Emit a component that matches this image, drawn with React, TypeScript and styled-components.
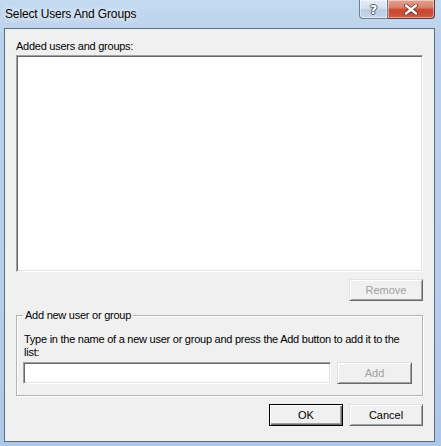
import React from "react";
import styled, { createGlobalStyle } from "styled-components";

const Global = createGlobalStyle`
  html, body { margin: 0; padding: 0; background: #b9d1ea; }
  * { box-sizing: border-box; }
`;

const Window = styled.div`
  width: 441px;
  height: 446px;
  display: flex;
  flex-direction: column;
  background: linear-gradient(180deg, #c4daf1 0%, #bad2eb 8%, #b6cfe9 60%, #adc8e6 100%);
  font-family: "Liberation Sans", Arial, sans-serif;
  font-size: 11px;
  color: #000;
  position: relative;
`;

const TitleBar = styled.div`
  height: 28px;
  display: flex;
  align-items: flex-start;
  justify-content: space-between;
  padding: 0 6px 0 5px;
`;

const Title = styled.div`
  font-family: "Liberation Sans", Arial, sans-serif;
  font-size: 12px;
  line-height: 14px;
  padding-top: 7px;
  letter-spacing: -0.15px;
  color: #000;
  text-shadow: 0 0 6px rgba(255, 255, 255, 0.9), 0 0 10px rgba(255, 255, 255, 0.7);
`;

const Caption = styled.div`
  display: flex;
  height: 19px;
`;

const CapButton = styled.div<{ $close?: boolean }>`
  width: ${(p) => (p.$close ? 47 : 29)}px;
  height: 19px;
  display: flex;
  align-items: center;
  justify-content: center;
  border: 1px solid ${(p) => (p.$close ? "#5d3b36" : "#6d7f93")};
  border-top: none;
  border-left: ${(p) => (p.$close ? "none" : undefined)};
  border-radius: ${(p) => (p.$close ? "0 0 4px 0" : "0 0 0 4px")};
  background: ${(p) =>
    p.$close
      ? "linear-gradient(180deg, #e3a08f 0%, #d88470 40%, #c9452e 55%, #cc5a3e 100%)"
      : "linear-gradient(180deg, #e6edf6 0%, #d5e1ef 45%, #bccde3 55%, #c7d7eb 100%)"};
  box-shadow: inset 0 0 0 1px rgba(255, 255, 255, 0.45);
`;

const HelpGlyph = styled.span`
  font-family: "DejaVu Sans", sans-serif;
  font-weight: bold;
  font-size: 13px;
  line-height: 13px;
  color: #fff;
  text-shadow: -1px 0 #4a5a6c, 1px 0 #4a5a6c, 0 -1px #4a5a6c, 0 1px #4a5a6c;
`;

const Client = styled.div`
  flex: 1;
  margin: 0 6px 4px 4px;
  border: 1px solid #5a6f85;
  background: #f0f0f0;
  display: flex;
  flex-direction: column;
  padding: 11px 11px 15px 11px;
`;

const Label = styled.div`
  line-height: 13px;
  height: 13px;
  letter-spacing: -0.25px;
`;

const Sunken = styled.div`
  background: #fff;
  border: 1px solid;
  border-color: #a0a0a0 #fff #fff #a0a0a0;
  box-shadow: inset 1px 1px 0 #696969, inset -1px -1px 0 #e3e3e3;
`;

const ListBox = styled(Sunken)`
  margin-top: 2px;
  flex: 1;
`;

const Row = styled.div<{ $mt: number }>`
  display: flex;
  justify-content: flex-end;
  gap: 6px;
  margin-top: ${(p) => p.$mt}px;
`;

const Button = styled.button<{ $default?: boolean; $w?: number }>`
  width: ${(p) => p.$w ?? 74}px;
  height: 22px;
  padding: 0;
  background: #f0f0f0;
  font-family: "Liberation Sans", Arial, sans-serif;
  font-size: 11px;
  color: ${(p) => (p.disabled ? "#a0a0a0" : "#000")};
  border: 1px solid;
  border-color: ${(p) => (p.$default ? "#000" : "#e3e3e3 #696969 #696969 #e3e3e3")};
  box-shadow: ${(p) =>
    p.$default
      ? "inset 1px 1px 0 #fff, inset -1px -1px 0 #696969, inset -2px -2px 0 #a0a0a0"
      : "inset 1px 1px 0 #fff, inset -1px -1px 0 #a0a0a0"};
  flex: none;
`;

const Group = styled.fieldset`
  margin: 8px 0 0 0;
  padding: 11px 10px 11px 6px;
  border: 1px solid #b3b3b3;
  box-shadow: inset 1px 1px 0 #fff, 1px 1px 0 #fff;
  min-width: 0;
`;

const Legend = styled.legend`
  padding: 0 2px;
  line-height: 13px;
  letter-spacing: -0.25px;
`;

const Desc = styled.div`
  line-height: 13px;
  letter-spacing: -0.25px;
  padding-left: 1px;
`;

const InputRow = styled.div`
  display: flex;
  gap: 6px;
  margin-top: 3px;
`;

const TextInput = styled(Sunken)`
  flex: 1;
  height: 22px;
`;

const CloseIcon = () => (
  <svg width="14" height="11" viewBox="0 0 14 11">
    <path d="M2 1.5 L12 9.5 M12 1.5 L2 9.5" stroke="#3b1410" strokeWidth="4" strokeLinecap="round" opacity="0.7" />
    <path d="M2 1.5 L12 9.5 M12 1.5 L2 9.5" stroke="#fff" strokeWidth="2.4" strokeLinecap="round" />
  </svg>
);

export default function App() {
  return (
    <>
      <Global />
      <Window>
        <TitleBar>
          <Title>Select Users And Groups</Title>
          <Caption>
            <CapButton>
              <HelpGlyph>?</HelpGlyph>
            </CapButton>
            <CapButton $close>
              <CloseIcon />
            </CapButton>
          </Caption>
        </TitleBar>
        <Client>
          <Label>Added users and groups:</Label>
          <ListBox />
          <Row $mt={7}>
            <Button disabled>Remove</Button>
          </Row>
          <Group>
            <Legend>Add new user or group</Legend>
            <Desc>
              Type in the name of a new user or group and press the Add button to add it to the list:
            </Desc>
            <InputRow>
              <TextInput />
              <Button disabled $w={75}>Add</Button>
            </InputRow>
          </Group>
          <Row $mt={8}>
            <Button $default>OK</Button>
            <Button>Cancel</Button>
          </Row>
        </Client>
      </Window>
    </>
  );
}
